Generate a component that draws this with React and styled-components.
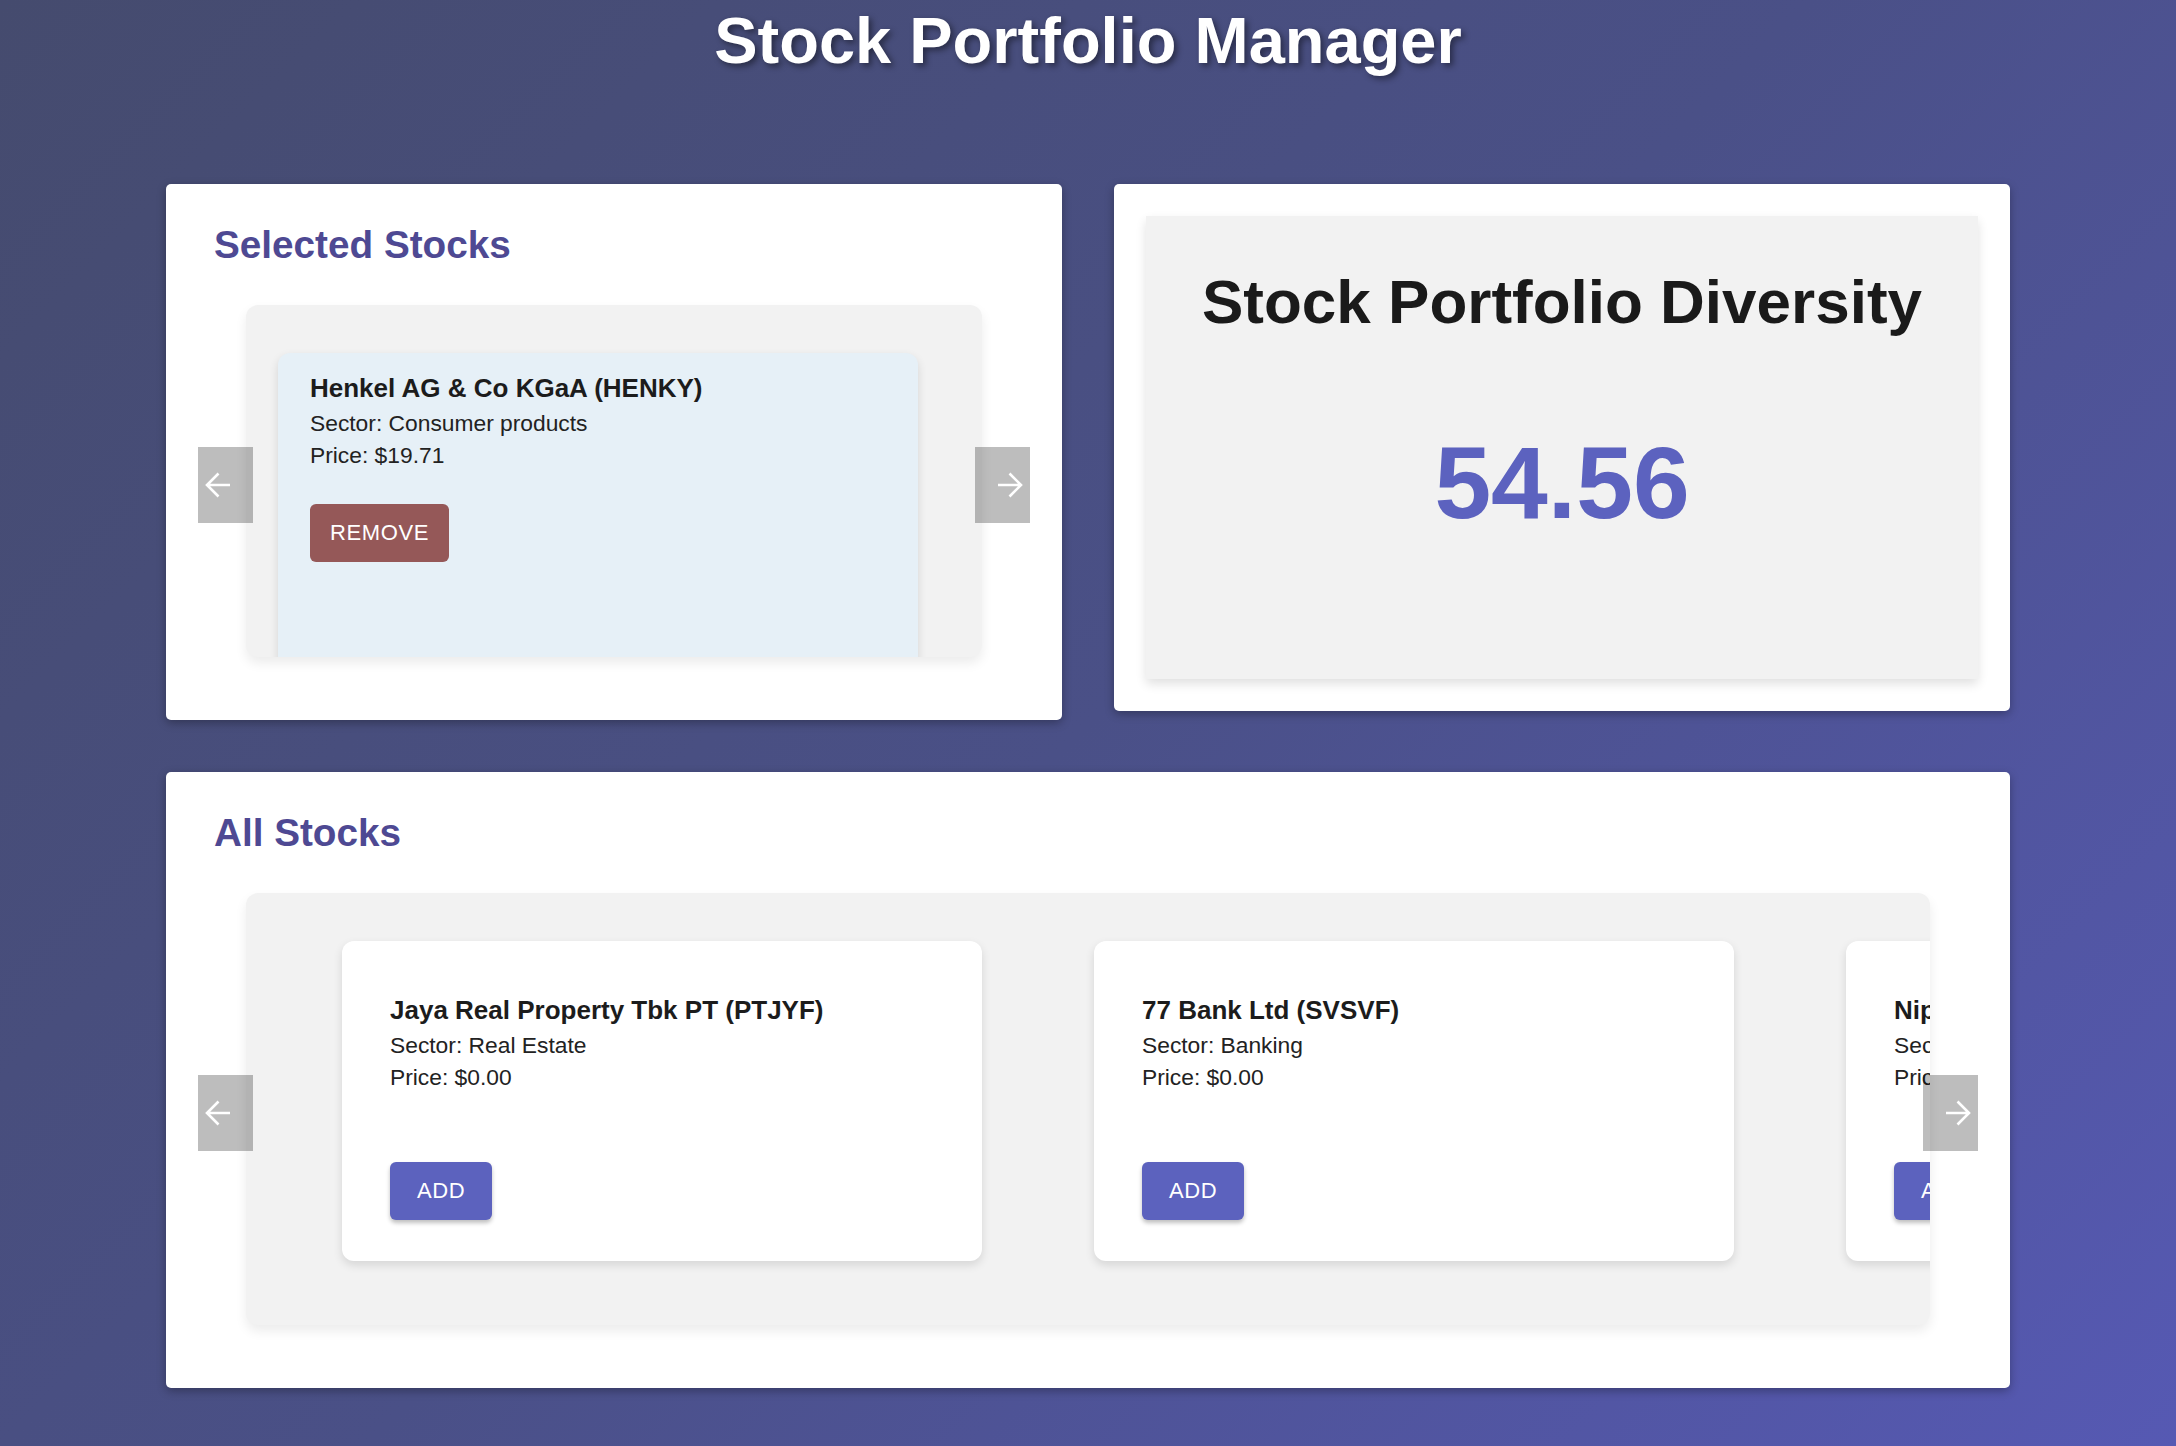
import React from 'react';
import styled, { createGlobalStyle } from 'styled-components';

const selectedStocks = [
  { name: 'Henkel AG & Co KGaA', ticker: 'HENKY', sector: 'Consumer products', price: 19.71 },
];

const allStocks = [
  { name: 'Jaya Real Property Tbk PT', ticker: 'PTJYF', sector: 'Real Estate', price: 0 },
  { name: '77 Bank Ltd', ticker: 'SVSVF', sector: 'Banking', price: 0 },
  { name: 'Nippon Steel Corp', ticker: 'NISTF', sector: 'Steel', price: 0 },
];

function Arrow({ dir }) {
  return (
    <ArrowButton $side={dir}>
      <svg width='26' height='26' viewBox='0 0 26 26' fill='none'>
        {dir === 'left' ? (
          <path d='M25 13H2M13.5 1.5L2 13l11.5 11.5' stroke='#fff' strokeWidth='2.6' />
        ) : (
          <path d='M1 13h23M12.5 1.5L24 13 12.5 24.5' stroke='#fff' strokeWidth='2.6' />
        )}
      </svg>
    </ArrowButton>
  );
}

function StockCard({ stock, selected }) {
  return (
    <Card $selected={selected}>
      <CardTitle>
        {stock.name} ({stock.ticker})
      </CardTitle>
      <CardLine>Sector: {stock.sector}</CardLine>
      <CardLine>Price: ${stock.price.toFixed(2)}</CardLine>
      <ActionButton $selected={selected}>{selected ? 'Remove' : 'Add'}</ActionButton>
    </Card>
  );
}

function StockCarousel({ stocks, selected }) {
  return (
    <CarouselWrap>
      <Arrow dir='left' />
      <Track $selected={selected}>
        {stocks.map((s) => (
          <StockCard key={s.ticker} stock={s} selected={selected} />
        ))}
      </Track>
      <Arrow dir='right' />
    </CarouselWrap>
  );
}

export default function App() {
  return (
    <Page>
      <GlobalStyle />
      <Title>Stock Portfolio Manager</Title>
      <Grid>
        <Panel>
          <Heading>Selected Stocks</Heading>
          <StockCarousel stocks={selectedStocks} selected />
        </Panel>
        <Panel $stat>
          <StatBox>
            <StatTitle>Stock Portfolio Diversity</StatTitle>
            <StatValue>54.56</StatValue>
          </StatBox>
        </Panel>
        <Panel $wide>
          <Heading>All Stocks</Heading>
          <StockCarousel stocks={allStocks} />
        </Panel>
      </Grid>
    </Page>
  );
}

const GlobalStyle = createGlobalStyle`
  html, body {
    margin: 0;
    padding: 0;
  }
  body {
    font-family: "Liberation Sans", Arial, Helvetica, sans-serif;
  }
`;

const Page = styled.div`
  min-height: 100vh;
  box-sizing: border-box;
  padding: 2px 0 56px;
  background: linear-gradient(135deg, #454b6e 0%, #4a5087 50%, #5659b3 100%);
  overflow: hidden;
`;

const Title = styled.h1`
  margin: 0;
  text-align: center;
  color: #fff;
  font-size: 65px;
  line-height: 78px;
  font-weight: 700;
  text-shadow: 3px 3px 6px rgba(0, 0, 0, 0.45);
`;

const Grid = styled.div`
  width: 1844px;
  margin: 104px auto 0;
  display: grid;
  grid-template-columns: 1fr 1fr;
  gap: 52px;
  align-items: start;
`;

const Panel = styled.section`
  grid-column: ${(p) => (p.$wide ? '1 / -1' : 'auto')};
  background: #fff;
  border-radius: 5px;
  box-sizing: border-box;
  padding: ${(p) => (p.$stat ? '32px' : '38px 32px 63px')};
  box-shadow: 0 3px 10px rgba(0, 0, 0, 0.3);
`;

const Heading = styled.h2`
  margin: 0 0 37px 16px;
  color: #4e4993;
  font-size: 38.7px;
  line-height: 46px;
  font-weight: 700;
`;

const CarouselWrap = styled.div`
  position: relative;
  padding: 0 48px;
`;

const Track = styled.div`
  display: flex;
  gap: 112px;
  height: ${(p) => (p.$selected ? '352px' : '432px')};
  box-sizing: border-box;
  padding: 48px 0 0 ${(p) => (p.$selected ? '32px' : '96px')};
  background: #f2f2f2;
  border-radius: 12px;
  overflow: hidden;
  box-shadow: 0 6px 12px rgba(0, 0, 0, 0.08);
`;

const ArrowButton = styled.button`
  position: absolute;
  top: 50%;
  ${(p) => (p.$side === 'left' ? 'left: 0;' : 'right: 0;')}
  transform: translateY(calc(-50% + 4px));
  width: 55px;
  height: 76px;
  border: none;
  padding: 0 7px;
  background: rgba(0, 0, 0, 0.26);
  display: flex;
  align-items: center;
  justify-content: ${(p) => (p.$side === 'left' ? 'flex-start' : 'flex-end')};
  cursor: pointer;
  z-index: 2;
`;

const Card = styled.div`
  flex: 0 0 640px;
  height: 320px;
  box-sizing: border-box;
  display: flex;
  flex-direction: column;
  align-items: flex-start;
  padding: ${(p) => (p.$selected ? '18px 32px' : '52px 48px 41px')};
  background: ${(p) => (p.$selected ? '#e6f0f7' : '#fff')};
  border-radius: 12px;
  box-shadow: 0 4px 10px rgba(0, 0, 0, 0.12);
`;

const CardTitle = styled.div`
  font-size: 26px;
  line-height: 34px;
  font-weight: 700;
  color: #1c1c1c;
  margin-bottom: 2px;
  white-space: nowrap;
`;

const CardLine = styled.div`
  font-size: 22.8px;
  line-height: 32px;
  color: #222;
  white-space: nowrap;
`;

const ActionButton = styled.button`
  margin-top: ${(p) => (p.$selected ? '33px' : 'auto')};
  height: 58px;
  min-width: 102px;
  padding: 0 20px;
  border: none;
  border-radius: 6px;
  font-family: inherit;
  font-size: 22px;
  letter-spacing: 0.6px;
  text-transform: uppercase;
  color: #fff;
  background: ${(p) => (p.$selected ? '#955858' : '#5c62be')};
  box-shadow: ${(p) => (p.$selected ? 'none' : '0 3px 4px rgba(0, 0, 0, 0.25)')};
  cursor: pointer;
`;

const StatBox = styled.div`
  height: 463px;
  box-sizing: border-box;
  padding-top: 51px;
  background: #f2f2f2;
  text-align: center;
  box-shadow: 0 5px 10px rgba(0, 0, 0, 0.12);
`;

const StatTitle = styled.h2`
  margin: 0;
  font-size: 62px;
  line-height: 70px;
  font-weight: 700;
  color: #1a1a1a;
`;

const StatValue = styled.div`
  margin-top: 88px;
  font-size: 102px;
  line-height: 117px;
  font-weight: 700;
  color: #5c62bf;
`;
